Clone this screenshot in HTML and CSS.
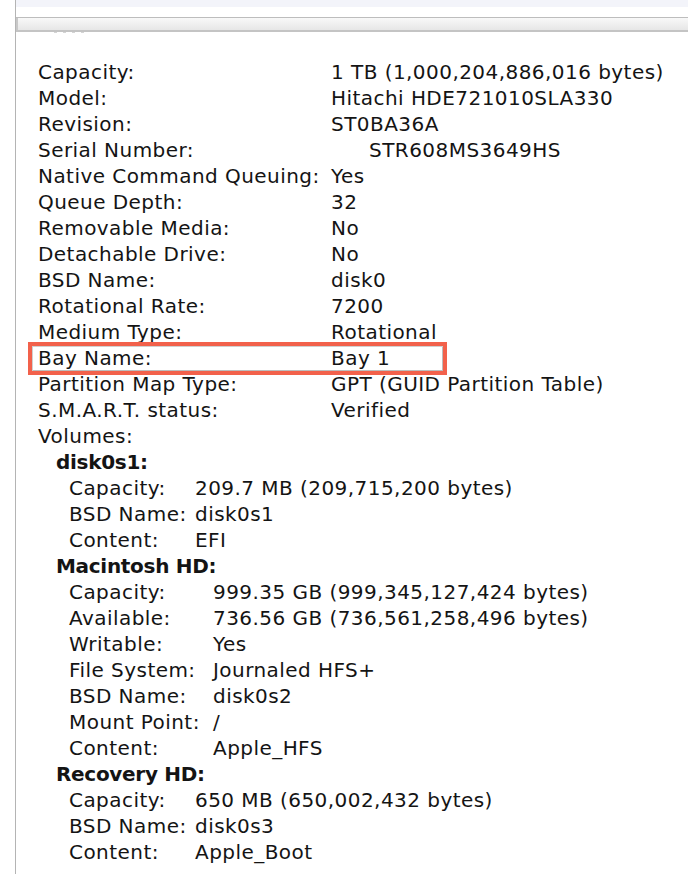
FILE: index.html
```html
<!DOCTYPE html>
<html>
<head>
<meta charset="utf-8">
<link rel="stylesheet" href="styles.css">
</head>
<body>
<div class="window">
  <div class="topband"></div>
  <div class="headerbar"></div>
  <div class="cutoff"><span></span><span></span><span></span><span></span></div>
  <div class="content">
    <div class="row"><span class="label">Capacity:</span><span class="value">1 TB (1,000,204,886,016 bytes)</span></div>
    <div class="row"><span class="label">Model:</span><span class="value">Hitachi HDE721010SLA330</span></div>
    <div class="row"><span class="label">Revision:</span><span class="value">ST0BA36A</span></div>
    <div class="row"><span class="label">Serial Number:</span><span class="value serial">STR608MS3649HS</span></div>
    <div class="row"><span class="label">Native Command Queuing:</span><span class="value">Yes</span></div>
    <div class="row"><span class="label">Queue Depth:</span><span class="value">32</span></div>
    <div class="row"><span class="label">Removable Media:</span><span class="value">No</span></div>
    <div class="row"><span class="label">Detachable Drive:</span><span class="value">No</span></div>
    <div class="row"><span class="label">BSD Name:</span><span class="value">disk0</span></div>
    <div class="row"><span class="label">Rotational Rate:</span><span class="value">7200</span></div>
    <div class="row"><span class="label">Medium Type:</span><span class="value">Rotational</span></div>
    <div class="row highlight"><span class="label">Bay Name:</span><span class="value">Bay 1</span></div>
    <div class="row"><span class="label">Partition Map Type:</span><span class="value">GPT (GUID Partition Table)</span></div>
    <div class="row"><span class="label">S.M.A.R.T. status:</span><span class="value">Verified</span></div>
    <div class="row"><span class="label">Volumes:</span></div>
    <div class="volume">
      <div class="vol-title">disk0s1:</div>
      <div class="vol-items">
        <div class="row"><span class="vlabel">Capacity:</span><span class="value">209.7 MB (209,715,200 bytes)</span></div>
        <div class="row"><span class="vlabel">BSD Name:</span><span class="value">disk0s1</span></div>
        <div class="row"><span class="vlabel">Content:</span><span class="value">EFI</span></div>
      </div>
    </div>
    <div class="volume">
      <div class="vol-title">Macintosh HD:</div>
      <div class="vol-items wide">
        <div class="row"><span class="vlabel">Capacity:</span><span class="value">999.35 GB (999,345,127,424 bytes)</span></div>
        <div class="row"><span class="vlabel">Available:</span><span class="value">736.56 GB (736,561,258,496 bytes)</span></div>
        <div class="row"><span class="vlabel">Writable:</span><span class="value">Yes</span></div>
        <div class="row"><span class="vlabel">File System:</span><span class="value">Journaled HFS+</span></div>
        <div class="row"><span class="vlabel">BSD Name:</span><span class="value">disk0s2</span></div>
        <div class="row"><span class="vlabel">Mount Point:</span><span class="value">/</span></div>
        <div class="row"><span class="vlabel">Content:</span><span class="value">Apple_HFS</span></div>
      </div>
    </div>
    <div class="volume">
      <div class="vol-title">Recovery HD:</div>
      <div class="vol-items">
        <div class="row"><span class="vlabel">Capacity:</span><span class="value">650 MB (650,002,432 bytes)</span></div>
        <div class="row"><span class="vlabel">BSD Name:</span><span class="value">disk0s3</span></div>
        <div class="row"><span class="vlabel">Content:</span><span class="value">Apple_Boot</span></div>
      </div>
    </div>
  </div>
</div>
</body>
</html>
```

FILE: styles.css
```css
html, body {
  margin: 0;
  padding: 0;
  background: #ffffff;
}
body {
  width: 688px;
  height: 874px;
  overflow: hidden;
  font-family: "DejaVu Sans", "Liberation Sans", sans-serif;
  color: #141414;
}
.window {
  margin-left: 15px;
  border-left: 1px solid #b4b4b4;
  height: 874px;
  box-sizing: border-box;
}
.topband {
  height: 7px;
  background: #f3f4fa;
}
.headerbar {
  margin-top: 10px;
  height: 12px;
  border-top: 1px solid #bdbdbd;
  border-bottom: 2px solid #c4c4c4;
  background: linear-gradient(#f8f8f8, #e6e6e6);
  box-shadow: inset 2px 0 0 #c8c8c8;
}
.cutoff {
  display: flex;
  gap: 6px;
  padding-left: 38px;
  height: 2px;
}
.cutoff span {
  width: 3px;
  height: 1px;
  background: #d4d4d4;
}
.content {
  padding: 25px 0 0 22px;
  font-size: 20px;
  letter-spacing: 0.45px;
  line-height: 26px;
}
.row {
  display: flex;
  white-space: pre;
}
.label {
  width: 293px;
  flex: none;
}
.value {
  white-space: pre;
}
.serial {
  padding-left: 38px;
}
.highlight {
  position: relative;
}
.highlight::after {
  content: "";
  position: absolute;
  left: -10px;
  top: -3px;
  width: 419px;
  height: 33px;
  box-sizing: border-box;
  border: 4px solid #f2614b;
  box-shadow: inset 1px 1px 0 #d0d0d0, inset -1px -1px 0 #bdbdbd;
}
.volume {
  padding-left: 18px;
}
.vol-title {
  font-weight: bold;
  letter-spacing: -0.3px;
}
.vol-items {
  padding-left: 13px;
}
.vlabel {
  width: 126px;
  flex: none;
}
.wide .vlabel {
  width: 144px;
}
```
